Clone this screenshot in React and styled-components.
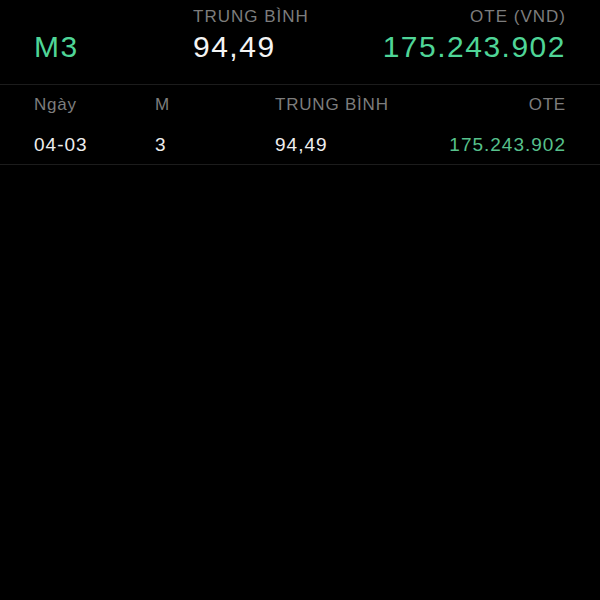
import React from "react";
import styled, { createGlobalStyle } from "styled-components";

const GlobalStyle = createGlobalStyle`
  html, body {
    margin: 0;
    padding: 0;
    background: #000;
    font-family: "Liberation Sans", Arial, sans-serif;
  }
`;

const Page = styled.div`
  width: 600px;
  height: 600px;
  background: #000;
  color: #f2f2f2;
`;

const Summary = styled.div`
  box-sizing: border-box;
  height: 85px;
  display: grid;
  grid-template-columns: 159px 1fr auto;
  align-items: end;
  padding: 7px 34px 19px 34px;
  border-bottom: 1px solid #1c1c1c;
`;

const Stat = styled.div`
  display: flex;
  flex-direction: column;
  align-items: ${p => (p.right ? "flex-end" : "flex-start")};
  gap: 2px;
`;

const Label = styled.span`
  font-size: 17px;
  line-height: 20px;
  letter-spacing: 1px;
  color: #7d7d7d;
`;

const Value = styled.span`
  font-size: 30px;
  line-height: 36px;
  letter-spacing: 1.5px;
  color: ${p => (p.green ? "#4fd597" : "#f4f4f4")};
`;

const Row = styled.div`
  box-sizing: border-box;
  height: ${p => (p.head ? "40px" : "40px")};
  display: grid;
  grid-template-columns: 121px 120px 1fr auto;
  align-items: center;
  padding: 0 34px;
  border-bottom: ${p => (p.head ? "none" : "1px solid #1c1c1c")};
`;

const HeadCell = styled.span`
  font-size: 17px;
  line-height: 20px;
  letter-spacing: 0.8px;
  color: #7d7d7d;
  text-align: ${p => (p.right ? "right" : "left")};
`;

const Cell = styled.span`
  font-size: 19px;
  line-height: 22px;
  letter-spacing: 1px;
  color: ${p => (p.green ? "#57c18c" : "#eeeeee")};
  text-align: ${p => (p.right ? "right" : "left")};
`;

export default function App() {
  return (
    <Page>
      <GlobalStyle />
      <Summary>
        <Stat>
          <Value green>M3</Value>
        </Stat>
        <Stat>
          <Label>TRUNG BÌNH</Label>
          <Value>94,49</Value>
        </Stat>
        <Stat right>
          <Label>OTE (VND)</Label>
          <Value green>175.243.902</Value>
        </Stat>
      </Summary>
      <Row head>
        <HeadCell>Ngày</HeadCell>
        <HeadCell>M</HeadCell>
        <HeadCell>TRUNG BÌNH</HeadCell>
        <HeadCell right>OTE</HeadCell>
      </Row>
      <Row>
        <Cell>04-03</Cell>
        <Cell>3</Cell>
        <Cell>94,49</Cell>
        <Cell green right>175.243.902</Cell>
      </Row>
    </Page>
  );
}
